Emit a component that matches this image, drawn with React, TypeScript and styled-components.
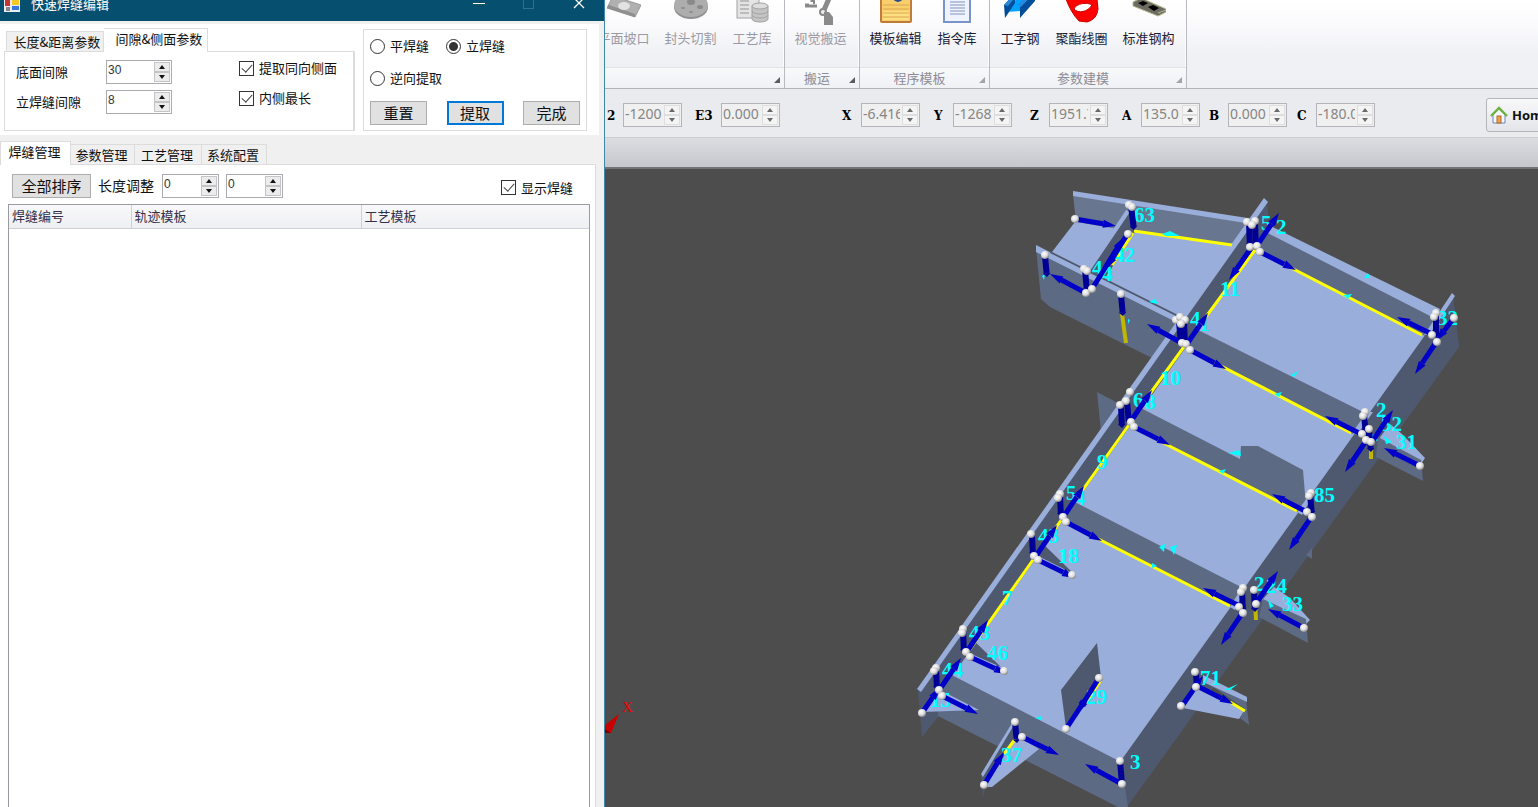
import React, { ReactNode } from "react";
import styled, { createGlobalStyle, css } from "styled-components";

const sans = `"Noto Sans CJK SC", "Liberation Sans", sans-serif`;

const GlobalStyle = createGlobalStyle`
  * { box-sizing: border-box; }
  html, body, #root { height: 100%; }
  body { margin: 0; overflow: hidden; font: 13px/18px ${sans}; color: #101010; background: #4d4d4d; }
  button, input { font: inherit; color: inherit; margin: 0; }
`;

const Desktop = styled.div`
  display: flex;
  height: 100vh;
  overflow: hidden;
`;

/* ---------- dialog ---------- */

const Dialog = styled.section`
  flex: 0 0 605px;
  display: flex;
  flex-direction: column;
  background: #f0f0f0;
  border-right: 1px solid #3f88a8;
`;

const TitleBar = styled.header`
  display: flex;
  align-items: center;
  height: 31px;
  margin-top: -10px;
  padding: 0 10px 3px 4px;
  flex: none;
  color: #fff;
  background: #064f6f;
`;

const Title = styled.h1`
  flex: 1;
  margin: 0 0 0 11px;
  font-size: 13px;
  font-weight: 400;
`;

const WindowButton = styled.button<{ $dim?: boolean }>`
  width: 50px;
  height: 24px;
  padding: 0;
  border: 0;
  background: none;
  color: ${(p) => (p.$dim ? "#32708a" : "#fff")};
  &:last-child { width: 30px; margin-left: 10px; }
  svg { display: block; margin: auto; }
`;

const Choice = styled.label`
  display: inline-flex;
  align-items: center;
  gap: 5px;
  white-space: nowrap;
`;

const Options = styled.div`
  display: flex;
  align-items: flex-start;
  gap: 8px;
  height: 111px;
  margin: 3px 5px 0 0;
  padding: 4px 12px 0 4px;
  background: #fff;
  flex: none;
`;

const Tabs = styled.div<{ $indent?: number }>`
  display: flex;
  align-items: flex-end;
  height: 23px;
  padding-left: ${(p) => p.$indent ?? 0}px;
`;

const Tab = styled.button<{ $active?: boolean; $width: number }>`
  width: ${(p) => p.$width}px;
  height: 20px;
  padding: 0 2px 0 0;
  border: 1px solid #dcdcdc;
  border-left-width: 0;
  border-bottom: 0;
  background: #f0f0f0;
  line-height: 18px;
  white-space: nowrap;
  &:first-child { border-left-width: 1px; }
  ${(p) =>
    p.$active &&
    css`
      height: 24px;
      margin-bottom: -1px;
      padding: 0 2px 3px 0;
      background: #fff;
      position: relative;
    `}
`;

const OptionTabs = styled.div`
  width: 351px;
`;

const OptionPane = styled.div`
  display: grid;
  grid-template-columns: 90px 133px 1fr;
  grid-auto-rows: 30px;
  align-items: center;
  height: 80px;
  padding: 5px 0 0 11px;
  border: 1px solid #dcdcdc;
  border-right-width: 2px;
  ${Choice} { margin-top: -8px; }
`;

const WeldBox = styled.fieldset`
  display: flex;
  flex-direction: column;
  justify-content: space-between;
  flex: 1;
  height: 102px;
  min-width: 0;
  margin: 1px 0 0;
  padding: 7px 6px 5px;
  border: 1px solid #dcdcdc;
`;

const WeldRow = styled.div<{ $spread?: boolean }>`
  display: flex;
  gap: 17px;
  justify-content: ${(p) => (p.$spread ? "space-between" : "flex-start")};
`;

const Box = styled.input.attrs({ type: "checkbox" })`
  appearance: none;
  width: 15px;
  height: 15px;
  flex: none;
  border: 1px solid #333;
  background: #fff;
  &:checked::after {
    content: "";
    display: block;
    width: 5px;
    height: 9px;
    margin: 0 0 0 4px;
    border: solid #444;
    border-width: 0 1px 1px 0;
    transform: rotate(42deg);
  }
`;

const Dot = styled.input.attrs({ type: "radio" })`
  appearance: none;
  width: 15px;
  height: 15px;
  flex: none;
  border: 1px solid #333;
  border-radius: 50%;
  background: #fff;
  &:checked { background: radial-gradient(circle, #333 4px, #fff 5px); }
`;

const PushButton = styled.button<{ $focused?: boolean; $wide?: boolean }>`
  width: ${(p) => (p.$wide ? 79 : 57)}px;
  height: 24px;
  padding: 0;
  font-size: 15px;
  line-height: 18px;
  background: #e1e1e1;
  border: ${(p) => (p.$focused ? "2px solid #0078d7" : "1px solid #adadad")};
`;

const Spin = styled.span<{ $width: number; $disabled?: boolean }>`
  display: inline-flex;
  width: ${(p) => p.$width}px;
  height: 24px;
  flex: none;
  border: 1px solid ${(p) => (p.$disabled ? "#b4b5ba" : "#aaaab0")};
  background: ${(p) => (p.$disabled ? "#f0f0f0" : "#fff")};
  input {
    flex: 1;
    min-width: 0;
    margin-right: 2px;
    padding: 0 0 0 1px;
    border: 0;
    outline: 0;
    background: none;
    font: ${(p) => (p.$disabled ? `14px/20px "Noto Sans"` : `12px/16px "Liberation Sans"`)}, ${sans};
    color: ${(p) => (p.$disabled ? "#858585" : "#333")};
    height: ${(p) => (p.$disabled ? 20 : 17)}px;
  }
`;

const Arrows = styled.span`
  display: flex;
  flex-direction: column;
  width: 16px;
  margin: 1px 1px 1px 0;
`;

const Arrow = styled.button<{ $disabled?: boolean }>`
  flex: 1;
  display: flex;
  align-items: center;
  justify-content: center;
  padding: 0;
  border: 1px solid ${(p) => (p.$disabled ? "#dedede" : "#c4c4c4")};
  background: ${(p) => (p.$disabled ? "#f4f4f4" : "#ececec")};
  color: ${(p) => (p.$disabled ? "#6a6a6a" : "#111")};
`;

function Spinner(p: { label: string; value: string; width: number; disabled?: boolean; id?: string }) {
  return (
    <Spin $width={p.width} $disabled={p.disabled}>
      <input id={p.id} aria-label={p.label} defaultValue={p.value} readOnly={p.disabled} />
      <Arrows>
        <Arrow $disabled={p.disabled} aria-label={`${p.label} +`}>
          <svg width="6" height="4"><path d="M0 4L3 0L6 4Z" fill="currentColor" /></svg>
        </Arrow>
        <Arrow $disabled={p.disabled} aria-label={`${p.label} -`}>
          <svg width="6" height="4"><path d="M0 0L3 4L6 0Z" fill="currentColor" /></svg>
        </Arrow>
      </Arrows>
    </Spin>
  );
}

const Manager = styled.div`
  flex: 1;
  display: flex;
  flex-direction: column;
  min-height: 0;
  margin: 6px 8px 0 0;
`;

const ManagerPane = styled.div`
  flex: 1;
  display: flex;
  flex-direction: column;
  padding: 9px 5px 0 8px;
  border: 1px solid #dcdcdc;
  border-width: 1px 1px 0 0;
  background: #fff;
`;

const Tools = styled.div`
  display: flex;
  align-items: center;
  gap: 7px;
  height: 24px;
  padding: 0 16px 0 4px;
  margin-bottom: 6px;
  ${Choice} { margin: 3px 1px 0 auto; }
`;

const ToolLabel = styled.span`
  font-size: 14px;
  padding: 0 1px 2px 0;
`;

const TableFrame = styled.div`
  flex: 1;
  border: 1px solid #9a9aa2;
  border-bottom: 0;
`;

const WeldTable = styled.table`
  width: 100%;
  table-layout: fixed;
  border-collapse: collapse;
  th {
    height: 23px;
    padding: 0 0 0 3px;
    text-align: left;
    font-weight: 400;
    color: #33304a;
    background: linear-gradient(#f8f8fa, #eeeff2);
    border-bottom: 1px solid #cfd0d6;
    border-right: 1px solid #cfd0d6;
  }
  th:last-child { border-right: 0; }
`;

/* ---------- main window ---------- */

const Main = styled.main`
  flex: 1;
  min-width: 0;
  display: flex;
  flex-direction: column;
  overflow: hidden;
`;

const Ribbon = styled.div`
  display: flex;
  flex: none;
  height: 89px;
  border-bottom: 1px solid #b2b3b8;
  background: linear-gradient(#fff, #fafafc 30%, #f0f1f5 60%, #eff0f4);
`;

const Group = styled.div<{ $width: number }>`
  width: ${(p) => p.$width}px;
  flex: none;
  display: flex;
  flex-direction: column;
  overflow: hidden;
  border-right: 1px solid #b9bac0;
  box-shadow: inset -1px 0 #fdfdfe;
`;

const GroupButtons = styled.div<{ $end?: boolean }>`
  flex: 1;
  display: flex;
  justify-content: ${(p) => (p.$end ? "flex-end" : "flex-start")};
  padding: 0 4px 0 2px;
`;

const RibbonButton = styled.button<{ $disabled?: boolean; $short?: boolean }>`
  width: ${(p) => (p.$short ? 56 : 67)}px;
  flex: none;
  display: flex;
  flex-direction: column;
  align-items: center;
  justify-content: flex-start;
  gap: 4px;
  height: 58px;
  margin-top: -9px;
  padding: 0;
  border: 0;
  background: none;
  color: ${(p) => (p.$disabled ? "#9a9aa4" : "#201c38")};
  white-space: nowrap;
  svg { flex: none; }
`;

const Caption = styled.div`
  display: flex;
  align-items: center;
  height: 21px;
  padding: 0 4px 0 0;
  border-top: 1px solid #e2e3e8;
  background: linear-gradient(#f8f9fb, #f0f1f5);
  color: #8c8c96;
  span { flex: 1; text-align: center; }
  svg { align-self: flex-end; margin-bottom: 5px; }
`;

const AxisBar = styled.div`
  display: flex;
  align-items: center;
  flex: none;
  height: 49px;
  padding-bottom: 4px;
  padding-top: 7px;
  border-bottom: 1px solid #cdced2;
  background: #eaebef;
  overflow: hidden;
`;

const Axis = styled.label<{ $gap: number; $label?: number }>`
  display: flex;
  align-items: center;
  flex: none;
  margin-left: ${(p) => p.$gap}px;
  b {
    width: ${(p) => p.$label ?? 19}px;
    padding-top: 2px;
    font: bold 12px/16px "DejaVu Serif", serif;
    color: #000;
  }
`;

const HomeButton = styled.button`
  display: flex;
  align-items: center;
  gap: 4px;
  flex: none;
  width: 76px;
  height: 34px;
  margin-left: 111px;
  padding: 0 3px;
  font: bold 13px/18px "Noto Sans", sans-serif;
  color: #111;
  border: 1px solid #b4b5ba;
  border-radius: 3px;
  background: linear-gradient(#f8f8fa, #e4e5ea);
`;

const Strip = styled.div`
  flex: none;
  height: 31px;
  background: linear-gradient(#dcdde1, #c6c7cd);
  border-bottom: 2px solid #737377;
`;

const Viewport = styled.div`
  flex: 1;
  min-height: 0;
  background: #4d4d4d;
  svg { display: block; width: 100%; height: 100%; }
`;

/* ---------- ribbon drawings ---------- */

const icons: Record<string, ReactNode> = {
  bevel: (
    <g>
      <path d="M6 5L34 14L28 26L0 17Z" fill="#b0b0b0" stroke="#999" />
      <path d="M0 17L28 26V23L2 14Z" fill="#8f8f8f" />
      <ellipse cx="17" cy="15" rx="6" ry="4" fill="#e2e2e2" />
    </g>
  ),
  head: (
    <g>
      <ellipse cx="17" cy="16" rx="17" ry="12" fill="#8f8f8f" />
      <ellipse cx="17" cy="14" rx="17" ry="12" fill="#adadad" />
      <g fill="#8a8a8a"><ellipse cx="17" cy="11" rx="4" ry="3" /><ellipse cx="26" cy="16" rx="3" ry="2" /><ellipse cx="9" cy="17" rx="2" ry="1" /><ellipse cx="17" cy="21" rx="2" ry="1" /></g>
    </g>
  ),
  craft: (
    <g stroke="#a2a2a2">
      <rect x="2" y="-1" width="22" height="28" fill="#e4e4e4" />
      <path d="M5 10h9M5 14h9M5 18h9M5 22h9" strokeWidth="2" stroke="#bcbcbc" />
      <path d="M17 15v13a8 3 0 0 0 16 0V15Z" fill="#c4c4c4" />
      <ellipse cx="25" cy="15" rx="8" ry="3" fill="#ddd" />
      <path d="M17 20a8 3 0 0 0 16 0M17 24a8 3 0 0 0 16 0" fill="none" />
    </g>
  ),
  robot: (
    <g fill="none" stroke="#8a8a8a">
      <path d="M8 5v6M5 14h-4M1 15h12" strokeWidth="3" />
      <path d="M10 5v8" strokeWidth="2" />
      <path d="M27 3L20 19" strokeWidth="5" />
      <circle cx="19" cy="21" r="3" fill="#eee" strokeWidth="2" />
      <path d="M20 21h5l4 5v8h-9z" fill="#8a8a8a" stroke="none" />
    </g>
  ),
  note: (
    <g>
      <rect x="2" y="-2" width="30" height="33" rx="1" fill="#f9cf6c" stroke="#c07b3a" strokeWidth="2" />
      <path d="M4 20h26v9H4z" fill="#ffe58b" opacity=".7" />
      <path d="M4 14h26M4 18h26M4 22h26M4 26h26" stroke="#dba64d" />
      <circle cx="19" cy="6" r="5" fill="#284f8f" />
    </g>
  ),
  page: (
    <g>
      <rect x="4" y="-2" width="26" height="33" fill="#eef3fd" stroke="#7894c8" strokeWidth="2" />
      <path d="M10 11h15M10 14h15M10 17h15M10 20h15M10 23h15" stroke="#8193bd" />
    </g>
  ),
  beam: (
    <g>
      <path d="M2 21L17 4L33 1L18 20Z" fill="#00a3ff" />
      <path d="M1 14L12 2V12L2 27ZM17 16L32 2V10L17 27Z" fill="#004d99" />
      <path d="M1 14L12 2h4L5 15ZM15 14L27 1h5L18 16Z" fill="#2888dd" />
      <path d="M14 -1h12v5l-4 4h-9z" fill="#fff" />
    </g>
  ),
  coil: <path d="M1 4C5-6 29-4 32 8L33 18C32 25 29 29 22 31L14 30C8 24 4 16 1 8Z M9 18C13 23 23 21 27 14C23 11 11 12 9 18Z" fill="#f00" stroke="#c80000" fillRule="evenodd" />,
  steel: (
    <g>
      <path d="M1 11L9 7L34 18V21L26 25L1 15Z" fill="#6b6b62" stroke="#b6b88c" />
      <path d="M6 12l5-2l5 2l-5 3zM16 16l5-2l6 3l-5 3z" fill="#000" />
      <path d="M26 22l8-3" stroke="#b6b88c" />
    </g>
  ),
};

function Tool(p: { icon: string; label: string; disabled?: boolean; short?: boolean }) {
  return (
    <RibbonButton $disabled={p.disabled} $short={p.short}>
      <svg width="34" height="34">{icons[p.icon]}</svg>
      {p.label}
    </RibbonButton>
  );
}

function GroupCaption({ text, faint }: { text: string; faint?: boolean }) {
  return (
    <Caption>
      <span>{text}</span>
      <svg width="6" height="6"><path d="M6 0V6H0Z" fill={faint ? "#a4a4a8" : "#5c5c60"} /></svg>
    </Caption>
  );
}

/* ---------- 3D model ---------- */

const LIGHT = "#9aaedb";
const FRONT = "#5d6a84";
const SIDE = "#4e5970";
const BACK = "#69768f";

const faces: [string, string][] = [
  // upper left bay
  [LIGHT, "1052,252 1078,218 1255,240 1190,335 1088,290"],
  [BACK, "1073,194 1252,222 1246,246 1130,231 1076,222"],
  [LIGHT, "1073,191 1254,219 1252,224 1073,196"],
  [SIDE, "1129,210 1135,232 1098,289 1086,273"],
  [LIGHT, "1126,210 1130,212 1090,271 1086,270"],
  // deck and outer plates
  [LIGHT, "936,670 1262,222 1440,320 1121,763"],
  [FRONT, "1097,392 1135,412 1108,430 1101,432"],
  [FRONT, "1036,248 1186,323 1186,346 1160,362 1050,307 1041,299"],
  [LIGHT, "1036,245 1188,322 1188,328 1036,252"],
  [SIDE, "1050,251 1180,316 1180,318 1050,253"],
  // outer right side
  [SIDE, "1453,296 1459,347 1127,807 1122,800 1120,762"],
  [FRONT, "1306,555 1312,548 1312,559"],
  // cross plates
  [FRONT, "1258,226 1437,317 1425,336 1258,249"],
  [LIGHT, "1256,219 1440,309 1436,319 1258,228"],
  [SIDE, "1453,296 1459,347 1440,372 1434,324"],
  [LIGHT, "1452,293 1455,296 1430,334 1424,335"],
  [FRONT, "1186,324 1367,414 1353,434 1188,348"],
  [LIGHT, "1367,412 1373,412 1357,435 1352,433"],
  [FRONT, "1131,403 1240,459 1241,446 1258,446 1303,470 1305,494 1310,497 1299,513 1131,427"],
  [LIGHT, "1309,495 1314,493 1302,515 1297,512"],
  [FRONT, "1063,496 1243,588 1231,607 1064,521"],
  [LIGHT, "1242,587 1246,588 1235,610 1230,607"],
  [FRONT, "938,668 1121,762 1128,807 1118,807 938,716"],
  // left rail
  [SIDE, "1267,201 1269,224 1255,250 938,696 938,717 922,737 918,690"],
  [LIGHT, "917,689 1264,198 1268,202 921,692"],
  // inner brackets
  [SIDE, "1037,538 1074,574 1038,556"],
  [SIDE, "967,634 1001,667 969,653"],
  [LIGHT, "922,712 942,691 979,710"],
  [SIDE, "1061,690 1097,643 1101,678 1066,728"],
  // foot bracket
  [SIDE, "1013,721 1017,735 986,784 983,798 981,776"],
  [LIGHT, "1017,736 1039,749 992,787 984,787"],
  [LIGHT, "1012,723 1014,725 983,777 981,774"],
  // right brackets
  [LIGHT, "1390,424 1402,434 1425,458 1421,464 1378,440"],
  [FRONT, "1378,437 1421,460 1423,481 1376,457"],
  [LIGHT, "1274,587 1290,598 1310,620 1306,624 1262,600"],
  [FRONT, "1263,599 1306,619 1308,643 1259,617"],
  [LIGHT, "1183,708 1199,685 1245,710 1239,719"],
  [FRONT, "1203,680 1246,700 1249,725 1240,718 1245,709"],
  [LIGHT, "1203,675 1247,697 1247,702 1203,682"],
];

const seams = [
  "1134,231 1232,245", "1255,250 1186,344 1131,420", "1131,422 1035,557 966,655",
  "1262,253 1422,335", "1190,350 1351,433", "1134,428 1297,511", "1067,523 1230,606",
  "1133,233 1112,265", "1101,680 1085,704", "1016,738 1004,754", "1230,702 1245,711",
];

const stubs = ["1122,314 1126,343", "1371,440 1371,459", "1255,600 1256,620"];

const arrows: [number, number, number, number][] = [
  [1075, 219, 1116, 226], [1131, 206, 1134, 230], [1128, 233, 1106, 269], [1045, 256, 1047, 277],
  [1085, 270, 1087, 292], [1086, 293, 1050, 274], [1092, 289, 1124, 237], [1121, 295, 1123, 316],
  [1249, 224, 1250, 247], [1255, 222, 1256, 247], [1256, 247, 1279, 213], [1251, 248, 1229, 280],
  [1260, 252, 1296, 270], [1179, 321, 1181, 345], [1184, 321, 1185, 345], [1182, 343, 1147, 324],
  [1187, 344, 1208, 313], [1190, 350, 1226, 369],
  [1436, 316, 1436, 338], [1434, 335, 1397, 317], [1454, 318, 1436, 341], [1437, 341, 1415, 374],
  [1364, 414, 1366, 437], [1363, 435, 1325, 416], [1369, 429, 1371, 452], [1372, 442, 1393, 410],
  [1368, 438, 1345, 472], [1420, 466, 1384, 448],
  [1127, 401, 1129, 424], [1121, 405, 1122, 428], [1131, 421, 1152, 390], [1134, 427, 1170, 445],
  [1060, 496, 1061, 517], [1062, 519, 1084, 486], [1066, 522, 1102, 541],
  [1032, 535, 1033, 556], [1036, 556, 1057, 525], [1038, 560, 1075, 578],
  [1310, 494, 1312, 515], [1307, 512, 1272, 494], [1312, 516, 1289, 550],
  [1242, 589, 1243, 612], [1240, 606, 1203, 588], [1243, 612, 1221, 645],
  [1254, 590, 1255, 612], [1257, 602, 1278, 571], [1304, 628, 1268, 609],
  [963, 630, 964, 653], [966, 653, 988, 620], [970, 657, 1007, 674],
  [936, 668, 937, 690], [938, 692, 961, 658], [942, 696, 978, 714], [922, 713, 940, 687],
  [1015, 722, 1017, 743], [1022, 737, 1059, 755], [984, 785, 1004, 752],
  [1066, 729, 1089, 694], [1099, 678, 1077, 713], [1120, 761, 1122, 784], [1122, 784, 1085, 764],
  [1196, 672, 1197, 690], [1182, 706, 1203, 676], [1197, 686, 1233, 704],
];

const balls: [number, number][] = [
  [1075, 219], [1129, 205], [1132, 207], [1128, 234], [1045, 255], [1084, 269], [1087, 271], [1086, 293],
  [1092, 289], [1121, 294], [1247, 222], [1255, 221], [1252, 225], [1250, 247], [1257, 246], [1260, 252],
  [1176, 320], [1180, 317], [1185, 320], [1181, 324], [1182, 343], [1186, 344], [1190, 350], [1436, 313],
  [1434, 317], [1432, 335], [1454, 318], [1437, 342], [1365, 412], [1363, 416], [1369, 429], [1362, 434],
  [1366, 440], [1371, 442], [1420, 466], [1130, 392], [1126, 401], [1120, 405], [1131, 422], [1134, 427],
  [1060, 494], [1058, 498], [1063, 517], [1066, 522], [1031, 534], [1034, 556], [1038, 560], [1072, 575],
  [1311, 493], [1309, 496], [1307, 512], [1312, 517], [1243, 588], [1241, 592], [1254, 590], [1239, 607],
  [1243, 613], [1256, 604], [1304, 628], [963, 629], [962, 633], [966, 652], [970, 657], [1004, 671],
  [936, 668], [934, 671], [939, 690], [942, 696], [922, 713], [1015, 722], [1022, 737], [984, 785],
  [1099, 678], [1066, 729], [1120, 761], [1122, 784], [1195, 672], [1196, 687], [1181, 706],
];

const tags: [string, number, number][] = [
  ["63", 1134, 222], ["42", 1114, 262], ["4", 1092, 275], ["4", 1102, 281], ["11", 1220, 296], ["5", 1261, 230],
  ["2", 1276, 234], ["4", 1190, 326], ["1", 1199, 331], ["10", 1160, 385], ["6", 1133, 407], ["8", 1145, 409],
  ["9", 1097, 469], ["5", 1066, 500], ["4", 1075, 505], ["43", 1038, 543], ["18", 1058, 563],
  ["7", 1002, 605], ["43", 969, 640], ["46", 987, 660], ["44", 942, 677], ["15", 930, 707],
  ["37", 1001, 762], ["29", 1086, 704], ["3", 1130, 769], ["71", 1200, 685], ["24", 1266, 593],
  ["2", 1254, 591], ["33", 1282, 611], ["85", 1314, 502], ["2", 1376, 417], ["52", 1381, 431],
  ["31", 1396, 449], ["32", 1437, 325],
];

const specks = [
  "1162,234 1170,231 1180,236 1166,236", "1149,302 1155,299 1158,304 1153,303", "1364,278 1368,273 1370,278",
  "1343,295 1352,294 1348,299", "1291,375 1299,371 1294,377", "1274,394 1282,392 1279,397",
  "1228,453 1240,450 1241,456", "1219,471 1226,469 1223,474", "1152,563 1157,566 1152,568",
  "1159,547 1165,544 1164,552", "1170,547 1177,545 1174,555", "1035,718 1042,716 1041,720",
  "1128,319 1130,320 1128,324", "1042,276 1045,274 1044,280", "1370,432 1378,440 1374,442",
  "1384,436 1392,442 1386,444", "1268,600 1274,606 1270,608", "1224,690 1238,684 1230,690",
];

function WeldArrow({ a }: { a: [number, number, number, number] }) {
  const [x1, y1, x2, y2] = a;
  const len = Math.hypot(x2 - x1, y2 - y1);
  const ux = (x2 - x1) / len;
  const uy = (y2 - y1) / len;
  const upright = Math.abs(ux) < 0.2;
  const head = upright ? 4 : 13;
  const bx = x2 - ux * head;
  const by = y2 - uy * head;
  return (
    <g fill={upright ? "#000096" : "#0000c8"} stroke={upright ? "#000096" : "#0000c8"}>
      <line x1={x1} y1={y1} x2={bx} y2={by} strokeWidth={upright ? 6 : 5} />
      <polygon strokeWidth="0" points={`${bx - uy * 4},${by + ux * 4} ${x2},${y2} ${bx + uy * 4},${by - ux * 4}`} />
    </g>
  );
}

function Model() {
  return (
    <svg viewBox="605 169 933 638" preserveAspectRatio="xMidYMid slice" role="img" aria-label="三维模型">
      <defs>
        <radialGradient id="ball" cx=".4" cy=".35" r=".65">
          <stop offset="0" stopColor="#fff" />
          <stop offset=".6" stopColor="#ddd" />
          <stop offset="1" stopColor="#888" />
        </radialGradient>
      </defs>
      <g>{faces.map(([fill, pts], i) => <polygon key={i} fill={fill} points={pts} />)}</g>
      <g fill="none" stroke="#ff0" strokeWidth="3">{seams.map((s) => <polyline key={s} points={s} />)}</g>
      <g fill="none" stroke="#c0b800" strokeWidth="4">{stubs.map((s) => <polyline key={s} points={s} />)}</g>
      <g fill="#0ff" fontFamily="Liberation Serif, serif" fontWeight="bold" fontSize="21">
        {tags.map(([t, x, y], i) => <text key={i} x={x} y={y}>{t}</text>)}
      </g>
      <g fill="#0ff">{specks.map((s) => <polygon key={s} points={s} />)}</g>
      {arrows.map((a, i) => <WeldArrow key={i} a={a} />)}
      {balls.map(([x, y], i) => <circle key={i} cx={x} cy={y} r="4" fill="url(#ball)" />)}
      <polygon points="619,714 611,733 605,733 605,725" fill="#c80000" />
      <polygon points="611,733 605,733 605,729" fill="#800000" />
      <text x="622" y="712" fill="#f00000" fontFamily="Liberation Serif, serif" fontSize="15">X</text>
    </svg>
  );
}

export default function App() {
  return (
    <Desktop>
      <GlobalStyle />
      <Dialog>
        <TitleBar>
          <svg width="16" height="16">
            <rect width="16" height="16" fill="#e8eef4" />
            <rect x="1" y="4" width="5" height="6" fill="#c83232" />
            <rect x="8" y="2" width="7" height="7" fill="#f8c828" />
            <rect x="2" y="11" width="4" height="4" fill="#888" />
            <rect x="8" y="10" width="7" height="4" fill="#3c78dc" />
          </svg>
          <Title>快速焊缝编辑</Title>
          <WindowButton aria-label="最小化"><svg width="12" height="12"><path d="M0 5.5H12" stroke="currentColor" /></svg></WindowButton>
          <WindowButton aria-label="最大化" $dim><svg width="12" height="12"><rect x=".5" y=".5" width="10" height="10" fill="none" stroke="currentColor" /></svg></WindowButton>
          <WindowButton aria-label="关闭"><svg width="12" height="12"><path d="M1 0L11 10M11 0L1 10" stroke="currentColor" strokeWidth="1.3" /></svg></WindowButton>
        </TitleBar>

        <Options>
          <OptionTabs>
            <Tabs $indent={2}>
              <Tab $width={98}>&nbsp;&nbsp;长度&amp;距离参数</Tab>
              <Tab $width={104} $active>&nbsp;&nbsp;&nbsp;间隙&amp;侧面参数</Tab>
            </Tabs>
            <OptionPane>
              <label htmlFor="bottom-gap">底面间隙</label>
              <Spinner id="bottom-gap" label="底面间隙" value="30" width={66} />
              <Choice><Box defaultChecked />提取同向侧面</Choice>
              <label htmlFor="weld-gap">立焊缝间隙</label>
              <Spinner id="weld-gap" label="立焊缝间隙" value="8" width={66} />
              <Choice><Box defaultChecked />内侧最长</Choice>
            </OptionPane>
          </OptionTabs>
          <WeldBox>
            <WeldRow>
              <Choice><Dot name="weld" />平焊缝</Choice>
              <Choice><Dot name="weld" defaultChecked />立焊缝</Choice>
            </WeldRow>
            <WeldRow><Choice><Dot name="reverse" />逆向提取</Choice></WeldRow>
            <WeldRow $spread>
              <PushButton>重置</PushButton>
              <PushButton $focused>提取</PushButton>
              <PushButton>完成</PushButton>
            </WeldRow>
          </WeldBox>
        </Options>

        <Manager>
          <Tabs>
            <Tab $width={71} $active>焊缝管理</Tab>
            <Tab $width={64}>参数管理</Tab>
            <Tab $width={67}>工艺管理</Tab>
            <Tab $width={65}>系统配置</Tab>
          </Tabs>
          <ManagerPane>
            <Tools>
              <PushButton $wide>全部排序</PushButton>
              <ToolLabel>长度调整</ToolLabel>
              <Spinner label="长度调整 1" value="0" width={57} />
              <Spinner label="长度调整 2" value="0" width={57} />
              <Choice><Box defaultChecked />显示焊缝</Choice>
            </Tools>
            <TableFrame>
              <WeldTable>
                <colgroup><col style={{ width: 122 }} /><col style={{ width: 230 }} /><col /></colgroup>
                <thead><tr><th>焊缝编号</th><th>轨迹模板</th><th>工艺模板</th></tr></thead>
              </WeldTable>
            </TableFrame>
          </ManagerPane>
        </Manager>
      </Dialog>

      <Main>
        <Ribbon>
          <Group $width={180}>
            <GroupButtons $end>
              <Tool icon="bevel" label="平面坡口" disabled />
              <Tool icon="head" label="封头切割" disabled />
              <Tool icon="craft" label="工艺库" disabled short />
            </GroupButtons>
            <GroupCaption text="" />
          </Group>
          <Group $width={75}>
            <GroupButtons><Tool icon="robot" label="视觉搬运" disabled /></GroupButtons>
            <GroupCaption text="搬运" />
          </Group>
          <Group $width={130}>
            <GroupButtons>
              <Tool icon="note" label="模板编辑" />
              <Tool icon="page" label="指令库" short />
            </GroupButtons>
            <GroupCaption text="程序模板" faint />
          </Group>
          <Group $width={197}>
            <GroupButtons>
              <Tool icon="beam" label="工字钢" short />
              <Tool icon="coil" label="聚酯线圈" />
              <Tool icon="steel" label="标准钢构" />
            </GroupButtons>
            <GroupCaption text="参数建模" faint />
          </Group>
        </Ribbon>
        <AxisBar>
          <Axis $gap={2} $label={16}><b>2</b><Spinner label="E2" value="-1200" width={59} disabled /></Axis>
          <Axis $gap={13} $label={26}><b>E3</b><Spinner label="E3" value="0.000" width={59} disabled /></Axis>
          <Axis $gap={62}><b>X</b><Spinner label="X" value="-6.416" width={59} disabled /></Axis>
          <Axis $gap={14}><b>Y</b><Spinner label="Y" value="-1268" width={59} disabled /></Axis>
          <Axis $gap={18}><b>Z</b><Spinner label="Z" value="1951.7" width={59} disabled /></Axis>
          <Axis $gap={14}><b>A</b><Spinner label="A" value="135.0" width={59} disabled /></Axis>
          <Axis $gap={9}><b>B</b><Spinner label="B" value="0.000" width={59} disabled /></Axis>
          <Axis $gap={10}><b>C</b><Spinner label="C" value="-180.0" width={59} disabled /></Axis>
          <HomeButton>
            <svg width="18" height="18">
              <path d="M3 9L9 3L15 9V17H3Z" fill="#f4f7fc" stroke="#6a86b8" />
              <path d="M1 10L9 2L17 10" fill="none" stroke="#6db33f" strokeWidth="2.4" />
              <rect x="7" y="10" width="4" height="7" fill="#f0a050" stroke="#b06a28" />
            </svg>
            Home
          </HomeButton>
        </AxisBar>
        <Strip />
        <Viewport><Model /></Viewport>
      </Main>
    </Desktop>
  );
}
